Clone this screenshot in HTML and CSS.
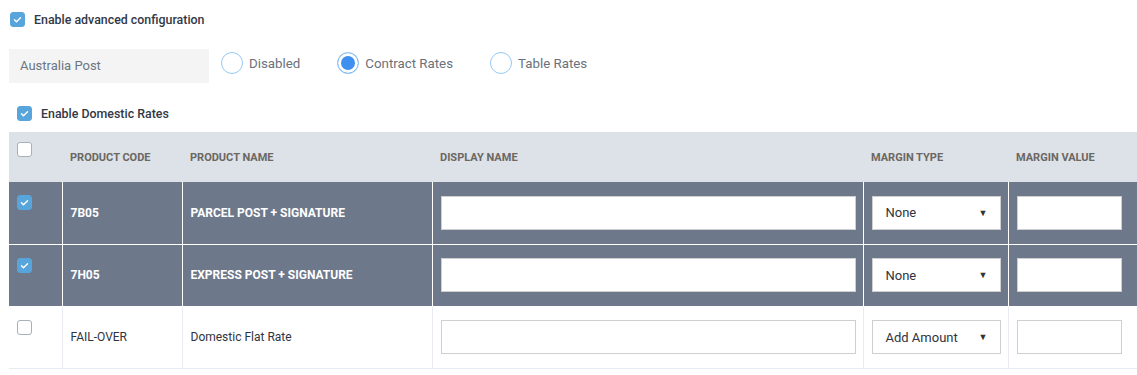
FILE: index.html
```html
<!DOCTYPE html>
<html>

<head>
    <meta charset="UTF-8">
    <title>Australia Post rates</title>
    <link rel="stylesheet" href="styles.css">
</head>

<body>
    <div class="check-line top">
        <span class="box checked"><svg viewBox="0 0 15 15"><path d="M4 7.8l2.3 2.2 4.7-4.6" /></svg></span>
        <span class="check-label">Enable advanced configuration</span>
    </div>

    <div class="carrier">
        <div class="carrier-name">Australia Post</div>
        <label class="radio"><span class="dot"></span>Disabled</label>
        <label class="radio"><span class="dot on"></span>Contract Rates</label>
        <label class="radio"><span class="dot"></span>Table Rates</label>
    </div>

    <div class="check-line domestic">
        <span class="box checked"><svg viewBox="0 0 15 15"><path d="M4 7.8l2.3 2.2 4.7-4.6" /></svg></span>
        <span class="check-label">Enable Domestic Rates</span>
    </div>

    <table class="rates">
        <colgroup>
            <col class="c-check">
            <col class="c-code">
            <col class="c-name">
            <col class="c-display">
            <col class="c-type">
            <col>
        </colgroup>
        <thead>
            <tr>
                <th class="cb"><span class="box"></span></th>
                <th>Product Code</th>
                <th>Product Name</th>
                <th>Display Name</th>
                <th>Margin Type</th>
                <th>Margin Value</th>
            </tr>
        </thead>
        <tbody>
            <tr class="selected">
                <td class="cb"><span class="box checked"><svg viewBox="0 0 15 15"><path d="M4 7.8l2.3 2.2 4.7-4.6" /></svg></span></td>
                <td>7B05</td>
                <td>PARCEL POST + SIGNATURE</td>
                <td><input class="field" type="text"></td>
                <td><div class="select">None<span class="arrow">▼</span></div></td>
                <td><input class="field value" type="text"></td>
            </tr>
            <tr class="selected">
                <td class="cb"><span class="box checked"><svg viewBox="0 0 15 15"><path d="M4 7.8l2.3 2.2 4.7-4.6" /></svg></span></td>
                <td>7H05</td>
                <td>EXPRESS POST + SIGNATURE</td>
                <td><input class="field" type="text"></td>
                <td><div class="select">None<span class="arrow">▼</span></div></td>
                <td><input class="field value" type="text"></td>
            </tr>
            <tr>
                <td class="cb"><span class="box"></span></td>
                <td>FAIL-OVER</td>
                <td>Domestic Flat Rate</td>
                <td><input class="field" type="text"></td>
                <td><div class="select">Add Amount<span class="arrow">▼</span></div></td>
                <td><input class="field value" type="text"></td>
            </tr>
        </tbody>
    </table>
</body>

</html>
```

FILE: styles.css
```css
html,
body {
    margin: 0;
    overflow: hidden;
    background: #fff;
}

body {
    padding: 0 0 0 9px;
    font-family: Roboto, "Liberation Sans", sans-serif;
    font-size: 13px;
    color: #3b404b;
}

/* checkboxes */
.box {
    display: inline-block;
    box-sizing: border-box;
    width: 15px;
    height: 15px;
    border: 1px solid #a7b0b9;
    border-radius: 3px;
    background: #fff;
    vertical-align: top;
}

.box.checked {
    border-color: #58a5db;
    background: #58a5db;
}

.box svg {
    display: block;
    width: 13px;
    height: 13px;
    fill: none;
    stroke: #fff;
    stroke-width: 1.6;
    stroke-linecap: round;
    stroke-linejoin: round;
}

.check-line {
    display: flex;
    align-items: center;
    gap: 9px;
}

.check-label {
    font-size: 12.4px;
    font-weight: 500;
    color: #333846;
}

.top {
    padding: 12px 0 0 1px;
}

.domestic {
    padding: 23px 0 0 8px;
}

/* carrier selector */
.carrier {
    display: flex;
    align-items: flex-start;
    margin-top: 22px;
}

.carrier-name {
    box-sizing: border-box;
    width: 200px;
    height: 34px;
    padding-left: 11px;
    line-height: 34px;
    background: #f4f4f4;
    color: #6b7683;
}

.radio {
    display: flex;
    align-items: center;
    gap: 6px;
    margin-top: 3px;
    margin-left: 12px;
    margin-right: 25px;
    font-size: 13.3px;
    color: #6a717b;
}

.radio + .radio {
    margin-left: 12px;
}

.dot {
    box-sizing: border-box;
    width: 22px;
    height: 22px;
    border: 1.5px solid #96c9f4;
    border-radius: 50%;
    background: #fff;
}

.dot.on {
    background: #3f8ff0;
    box-shadow: inset 0 0 0 3px #fff;
}

/* table */
.rates {
    margin-top: 11px;
    width: 1140px;
    border-collapse: collapse;
    table-layout: fixed;
}

.c-check { width: 53px; }
.c-code { width: 120px; }
.c-name { width: 250px; }
.c-display { width: 431px; }
.c-type { width: 145px; }

.rates thead tr {
    height: 50px;
}

.rates tbody tr {
    height: 62px;
}

.rates th {
    padding: 0 8px;
    background: #dde1e8;
    text-align: left;
    font-size: 11px;
    font-weight: 700;
    text-transform: uppercase;
    color: #6b6761;
}

.rates td {
    padding: 0 7px 0 8px;
    border-left: 1px solid #e8ebef;
    border-bottom: 1px solid #e8ebef;
    font-size: 12px;
    color: #2f3440;
}

.rates td:first-child {
    border-left: none;
}

.rates .cb {
    vertical-align: top;
    padding-top: 13px;
}

.rates th.cb {
    padding-top: 10px;
}

.rates tr.selected td {
    background: #6d798b;
    border-color: #fff;
    color: #fff;
    font-weight: 700;
}

.field {
    display: block;
    box-sizing: border-box;
    width: 100%;
    height: 34px;
    margin: 0;
    border: 1px solid #cfcfcf;
    background: #fff;
    font: inherit;
}

.field.value {
    width: 105px;
}

.select {
    display: flex;
    align-items: center;
    justify-content: space-between;
    box-sizing: border-box;
    height: 34px;
    padding: 0 12px 0 13px;
    border: 1px solid #cfcfcf;
    background: #fff;
    font-size: 13px;
    font-weight: 400;
    color: #2f3440;
}

.arrow {
    font-size: 9px;
    color: #333;
}
```
